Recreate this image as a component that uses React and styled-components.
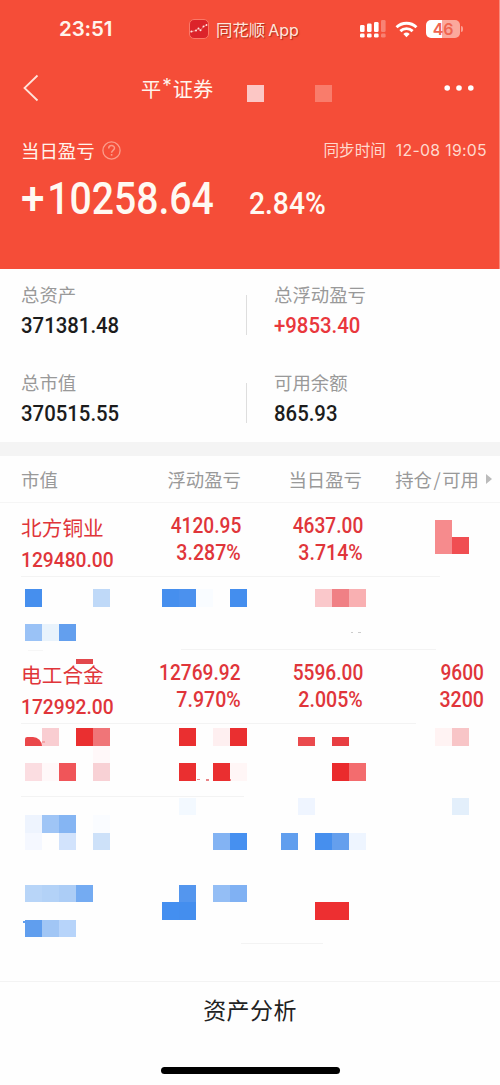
import React from "react";
import styled, { createGlobalStyle } from "styled-components";

const GlobalStyle = createGlobalStyle`
  body {
    margin: 0;
    background: #fefefe;
    font-family: "Noto Sans CJK SC", sans-serif;
  }
`;

const Screen = styled.div`
  display: flex;
  flex-direction: column;
  width: 500px;
  height: 1085px;
  overflow: hidden;
`;

const Header = styled.header`
  position: relative;
  box-sizing: border-box;
  height: 269px;
  background: #f54d38;
  border-right: 1px solid #f98a7c;
  color: #fff4ec;
`;

const StatusBar = styled.div`
  display: flex;
  align-items: center;
  height: 58px;
  padding-left: 59px;
`;

const Clock = styled.span`
  width: 130px;
  font: 600 20.5px/24px Inter, sans-serif;
  letter-spacing: -0.1px;
`;

const AppName = styled.span`
  width: 144px;
  margin-left: 7px;
  font-size: 16.4px;
  line-height: 24px;
  white-space: nowrap;
  color: #ffe6dc;
  text-shadow: 1px 1px 1px rgba(120, 20, 10, 0.6);

  span {
    margin-left: 3px;
    font-family: Inter, sans-serif;
    font-size: 16px;
  }
`;

const StatusIcons = styled.div`
  display: flex;
  align-items: center;
  gap: 8px;
`;

const Battery = styled.div`
  display: flex;
  align-items: center;

  &::after {
    content: "";
    width: 2px;
    height: 6px;
    margin-left: 1px;
    border-radius: 0 2px 2px 0;
    background: #fa9e92;
  }
`;

const BatteryLevel = styled.div`
  width: 34px;
  height: 18px;
  border-radius: 5px;
  background: linear-gradient(90deg, #fff 46%, #fba89c 46%);
  color: #ef6450;
  font: 600 16px/18px Inter, sans-serif;
  letter-spacing: -0.3px;
  text-align: center;
`;

const NavBar = styled.div`
  display: flex;
  align-items: center;
  height: 60px;
  padding: 0 25px 0 23px;
`;

const NavTitle = styled.h1`
  display: flex;
  flex: 1;
  margin: 1px 0 0 102px;
  font-size: 20.2px;
  font-weight: 400;
  line-height: 30px;
  white-space: nowrap;

  span {
    margin: -3px 1px 0;
    font-family: Inter, sans-serif;
    font-size: 19px;
  }
`;

const Today = styled.div`
  display: flex;
  align-items: center;
  justify-content: space-between;
  height: 24px;
  margin: 20px 12px 0 21px;
`;

const TodayLabel = styled.span`
  display: flex;
  align-items: center;
  gap: 7px;
  font-size: 18.4px;
  line-height: 24px;
`;

const SyncTime = styled.span`
  font-size: 15.6px;
  line-height: 24px;
  color: #ffd9cd;

  span {
    margin-left: 10px;
    font-family: Inter, sans-serif;
    font-size: 15.8px;
    letter-spacing: 0.3px;
  }
`;

const Profit = styled.div`
  display: flex;
  align-items: baseline;
  height: 52px;
  margin: 12px 0 0 21px;
  color: #fff9f2;
`;

const ProfitCell = styled.div`
  width: ${({ $width }) => $width}px;
`;

// narrow, DIN-like digits
const Num = styled.span`
  display: inline-block;
  font-family: Roboto, sans-serif;
  font-weight: 500;
  font-size: ${({ $size }) => $size || 22}px;
  line-height: ${({ $line }) => $line || 26}px;
  color: ${({ $color }) => $color || "inherit"};
  transform: scaleX(${({ $squeeze }) => $squeeze || 0.925});
  transform-origin: ${({ $right }) => ($right ? "right" : "left")} center;
  white-space: nowrap;
`;

const Plus = styled.span`
  margin-right: 3px;
  font-size: 47px;
  line-height: 1;
`;

const Summary = styled.section`
  display: grid;
  grid-template-columns: 246px 1fr;
  grid-template-rows: 88px 88px;
  height: 173px;
  overflow: hidden;
`;

const SummaryItem = styled.div`
  display: flex;
  flex-direction: column;
  padding: 13px 0 0 ${({ $second }) => ($second ? 28 : 21)}px;
  background: ${({ $second }) =>
    $second
      ? "linear-gradient(#dedede, #dedede) 0 26px / 1px 40px no-repeat"
      : "none"};
`;

const SummaryLabel = styled.span`
  font-size: 18.4px;
  line-height: 24px;
  margin-bottom: 7px;
  color: #999;
`;

const Divider = styled.div`
  height: 14px;
  background: #f4f4f4;
`;

const TableHead = styled.div`
  display: grid;
  grid-template-columns: 115px 105px 121px 117px 1fr;
  align-items: center;
  height: 46px;
  padding-left: 21px;
  border-bottom: 1px solid #f5f5f5;
  font-size: 18.4px;
  line-height: 26px;
  color: #999;

  span {
    text-align: right;
    white-space: nowrap;
  }

  span:first-child {
    text-align: left;
  }

  i {
    margin: 0 1.5px;
    font-style: normal;
  }

  svg {
    margin-left: 7px;
  }
`;

const Holdings = styled.section`
  position: relative;
  height: 478px;
`;

const HoldingRow = styled.div`
  box-sizing: border-box;
  display: grid;
  grid-template-columns: 115px 105px 122px 121px;
  height: 73.5px;
  padding: 9px 0 0 21px;
  color: #e0353a;
  background: linear-gradient(#f3f3f3, #f3f3f3) ${({ $from }) => $from}px 100% /
    ${({ $length }) => $length}px 1px no-repeat;
`;

const Cell = styled.div`
  display: flex;
  flex-direction: column;
  align-items: ${({ $left }) => ($left ? "flex-start" : "flex-end")};
`;

const StockName = styled.span`
  font-size: 20.7px;
  line-height: 30px;
  margin-bottom: 5px;
  white-space: nowrap;
`;

// censoring blocks laid over the rows
const Mosaic = styled.div`
  position: absolute;
  top: ${({ $top }) => $top}px;
  left: 24.9px;
  display: grid;
  grid-template-columns: repeat(26, 17.08px);
  grid-auto-rows: 17.4px;
`;

const Block = styled.i`
  grid-column: ${({ $col }) => $col + 1};
  grid-row: ${({ $row }) => $row + 1};
  height: ${({ $half }) => ($half ? "50%" : "100%")};
  align-self: end;
  background: ${({ $fill }) => $fill};
`;

const Smudge = styled.i`
  position: absolute;
  left: ${({ $x }) => $x}px;
  top: ${({ $y }) => $y}px;
  width: ${({ $w }) => $w}px;
  height: ${({ $h }) => $h}px;
  border-radius: ${({ $radius }) => $radius || "0"};
  background: ${({ $fill }) => $fill};
`;

const Footer = styled.footer`
  display: flex;
  flex-direction: column;
  align-items: center;
  justify-content: space-between;
  box-sizing: border-box;
  height: 104px;
  padding: 10px 0 11px;
  border-top: 1px solid #f3f3f3;
  font-size: 23px;
  line-height: 34px;
  letter-spacing: 0.4px;
  color: #222;
`;

const HomeBar = styled.div`
  width: 179px;
  height: 7px;
  border-radius: 4px;
  background: #000;
`;

const summary = [
  { label: "总资产", value: "371381.48" },
  { label: "总浮动盈亏", value: "+9853.40", color: "#e9373c" },
  { label: "总市值", value: "370515.55" },
  { label: "可用余额", value: "865.93" },
];

const holdings = [
  {
    name: "北方铜业",
    value: "129480.00",
    cells: [["4120.95", "3.287%"], ["4637.00", "3.714%"]],
    line: [21, 419],
  },
  { line: [181, 255] },
  {
    name: "电工合金",
    value: "172992.00",
    cells: [["12769.92", "7.970%"], ["5596.00", "2.005%"], ["9600", "3200"]],
    line: [21, 395],
  },
  { line: [21, 223] },
  { line: [0, 0] },
  { line: [241, 82] },
];

// [column, row, colour, half height]
const blocks = [
  [24, 0, "#f68b8d"],
  [24, 1, "#f68b8d"],
  [25, 1, "#f04e52"],

  [0, 4, "#468fee"],
  [4, 4, "#bfd9f8"],
  [8, 4, "#468fee"],
  [9, 4, "#4b91ee"],
  [10, 4, "#f9fcff"],
  [12, 4, "#448eee"],
  [17, 4, "#fac8cb"],
  [18, 4, "#f08085"],
  [19, 4, "#f9b0b2"],
  [0, 6, "#9ac2f6"],
  [1, 6, "#e9f3fc"],
  [2, 6, "#639fee"],

  [1, 12, "#f9cdd1"],
  [3, 12, "#ea2f30"],
  [4, 12, "#f07578"],
  [9, 12, "#ea2f30"],
  [11, 12, "#feeff0"],
  [12, 12, "#ea2f30"],
  [16, 12, "#ea4a4d", true],
  [18, 12, "#e83e42", true],
  [24, 12, "#fff3f3"],
  [25, 12, "#f8c5c7"],
  [4, 13, "#fff8f9"],
  [0, 14, "#fbdde1"],
  [1, 14, "#fff8f9"],
  [2, 14, "#f05559"],
  [4, 14, "#f8d1d5"],
  [9, 14, "#ea2f30"],
  [11, 14, "#ea2f30"],
  [12, 14, "#fff6f6"],
  [18, 14, "#ea2b2d"],
  [19, 14, "#f36c6e"],

  [9, 16, "#f3f9ff"],
  [16, 16, "#eff5ff"],
  [25, 16, "#e3effb"],
  [0, 17, "#eef4fe"],
  [1, 17, "#9fc5f6"],
  [2, 17, "#85b5f3"],
  [4, 17, "#fafcff"],
  [0, 18, "#f5f8ff"],
  [2, 18, "#d2e3fc"],
  [4, 18, "#cde1f9"],
  [11, 18, "#83b3f3"],
  [12, 18, "#4690f0"],
  [15, 18, "#609eee"],
  [17, 18, "#468fee"],
  [18, 18, "#659fed"],
  [19, 18, "#eef5ff"],

  [0, 21, "#b8d5f8"],
  [1, 21, "#b3d2f7"],
  [2, 21, "#accdf6"],
  [3, 21, "#74abf2"],
  [9, 21, "#5496ee"],
  [11, 21, "#94bef5"],
  [12, 21, "#80b1f3"],
  [8, 22, "#448ff0"],
  [9, 22, "#448eee"],
  [17, 22, "#ed2f31"],
  [18, 22, "#ed2f31"],
  [0, 23, "#609eee"],
  [1, 23, "#a1c6f5"],
  [2, 23, "#b7d4fa"],
];

// leftovers of the text under the blocks: [x, y, width, height, colour, radius]
const smudges = [
  [76, 156, 17, 5, "#e2484c"],
  [25, 234, 17, 9, "#ea474a", "3px 12px 0 0"],
  [42, 238, 3, 2, "#f6a3a6"],
  [351, 129, 2, 1, "#ccc"],
  [358, 129, 3, 1, "#ccc"],
  [197, 276, 3, 1, "#e98487"],
  [206, 276, 3, 2, "#e98487"],
  [230, 276, 1, 2, "#e98487"],
  [28, 147, 15, 1, "#f6f6f6"],
  [23, 418, 5, 2, "#609eee"],
];

const BackIcon = () => (
  <svg width="16" height="28" viewBox="0 0 16 28" fill="none" stroke="#ffe3da" strokeWidth="1.8">
    <path d="M14.5 1.5 1.5 14l13 12.5" />
  </svg>
);

const AppIcon = () => (
  <svg width="20" height="20" viewBox="0 0 20 20">
    <rect x=".5" y=".5" width="19" height="19" rx="4.5" fill="#dc232a" stroke="#fb7767" />
    <path d="M1 13l6-1.5 2.5-2 2 1.7 3-3.7L18 6" fill="none" stroke="#e8736f" strokeWidth="1" />
    <g fill="#ffe3df">
      <circle cx="2.5" cy="12.5" r="1" />
      <circle cx="7" cy="11.5" r="1" />
      <circle cx="9.5" cy="9.5" r="1" />
      <circle cx="11.5" cy="11.2" r="1" />
      <circle cx="14.5" cy="7.5" r="1" />
      <circle cx="17.5" cy="6" r=".9" />
    </g>
  </svg>
);

const SignalIcon = () => (
  <svg width="27" height="18" viewBox="0 0 27 18" fill="#fff">
    <rect x="0" y="5" width="4.6" height="7" rx="1.3" />
    <rect x="7" y="3.5" width="4.6" height="8.5" rx="1.3" />
    <rect x="14" y="2" width="4.6" height="10" rx="1.3" />
    <rect x="21" y="0" width="4.6" height="12" rx="1.3" opacity=".3" />
    <rect x="0" y="13.4" width="4.6" height="4.2" rx="1.4" />
    <rect x="7" y="13.4" width="4.6" height="4.2" rx="1.4" />
    <rect x="14" y="13.4" width="4.6" height="4.2" rx="1.4" />
    <rect x="21" y="13.4" width="4.6" height="4.2" rx="1.4" opacity=".3" />
  </svg>
);

const WifiIcon = () => (
  <svg width="23" height="17" viewBox="0 0 24 17" fill="none" stroke="#fff" strokeWidth="3">
    <path d="M1.6 6.2a15 15 0 0 1 20.8 0" />
    <path d="M5.6 10.2a9.2 9.2 0 0 1 12.8 0" />
    <path d="M12 16.6 8.7 13.3a4.8 4.8 0 0 1 6.6 0z" fill="#fff" stroke="none" />
  </svg>
);

const HelpIcon = () => (
  <svg width="19" height="19" viewBox="0 0 19 19" fill="none" stroke="#fb9c8b" strokeWidth="1.3">
    <circle cx="9.5" cy="9.5" r="8.6" />
    <path d="M6.7 7.4c0-3.8 5.8-3.6 5.8-.3 0 2.2-2.9 2.2-2.9 4.6" strokeWidth="1.5" />
    <path d="M9.6 13v1.7" strokeWidth="1.6" />
  </svg>
);

const MoreIcon = () => (
  <svg width="30" height="6" viewBox="0 0 30 6" fill="#fff">
    <circle cx="3.2" cy="3" r="2.8" />
    <circle cx="15" cy="3" r="2.8" />
    <circle cx="26.8" cy="3" r="2.8" />
  </svg>
);

const App = () => {
  return (
    <Screen>
      <GlobalStyle />
      <Header>
        <StatusBar>
          <Clock>23:51</Clock>
          <AppIcon />
          <AppName>
            同花顺<span>App</span>
          </AppName>
          <StatusIcons>
            <SignalIcon />
            <WifiIcon />
            <Battery>
              <BatteryLevel>46</BatteryLevel>
            </Battery>
          </StatusIcons>
        </StatusBar>

        <NavBar>
          <BackIcon />
          <NavTitle>
            平<span>*</span>证券
          </NavTitle>
          <MoreIcon />
        </NavBar>

        <Today>
          <TodayLabel>
            当日盈亏
            <HelpIcon />
          </TodayLabel>
          <SyncTime>
            同步时间<span>12-08 19:05</span>
          </SyncTime>
        </Today>

        <Profit>
          <ProfitCell $width={228}>
            <Num $size={43.5} $line={52} $squeeze={0.9}>
              <Plus>+</Plus>10258.64
            </Num>
          </ProfitCell>
          <Num $size={31} $line={40} $squeeze={0.91}>2.84%</Num>
        </Profit>

        <Mosaic $top={84.5}>
          <Block $col={13} $row={0} $fill="#fcc7c5" />
          <Block $col={17} $row={0} $fill="#f97c6b" />
        </Mosaic>
      </Header>

      <Summary>
        {summary.map(({ label, value, color }, i) => (
          <SummaryItem key={label} $second={i % 2 === 1}>
            <SummaryLabel>{label}</SummaryLabel>
            <Num $color={color || "#1c1c1c"}>{value}</Num>
          </SummaryItem>
        ))}
      </Summary>

      <Divider />

      <TableHead>
        <span>市值</span>
        <span>浮动盈亏</span>
        <span>当日盈亏</span>
        <span>
          持仓<i>/</i>可用
        </span>
        <svg width="6" height="10" viewBox="0 0 6 10" fill="#bbb">
          <path d="M0 0l6 5-6 5z" />
        </svg>
      </TableHead>

      <Holdings>
        {holdings.map(({ name, value, cells = [], line }, i) => (
          <HoldingRow key={i} $from={line[0]} $length={line[1]}>
            {name && (
              <Cell $left>
                <StockName>{name}</StockName>
                <Num $size={21} $squeeze={0.915}>{value}</Num>
              </Cell>
            )}
            {cells.map(([top, bottom]) => (
              <Cell key={top}>
                <Num $size={21.5} $line={27} $squeeze={0.89} $right>{top}</Num>
                <Num $size={21.5} $line={27} $squeeze={0.91} $right>{bottom}</Num>
              </Cell>
            ))}
          </HoldingRow>
        ))}

        <Mosaic $top={16.7}>
          {blocks.map(([col, row, fill, half]) => (
            <Block key={`${col}-${row}`} $col={col} $row={row} $fill={fill} $half={half} />
          ))}
        </Mosaic>
        {smudges.map(([x, y, w, h, fill, radius]) => (
          <Smudge key={`${x}-${y}`} $x={x} $y={y} $w={w} $h={h} $fill={fill} $radius={radius} />
        ))}
      </Holdings>

      <Footer>
        资产分析
        <HomeBar />
      </Footer>
    </Screen>
  );
};

export default App;
